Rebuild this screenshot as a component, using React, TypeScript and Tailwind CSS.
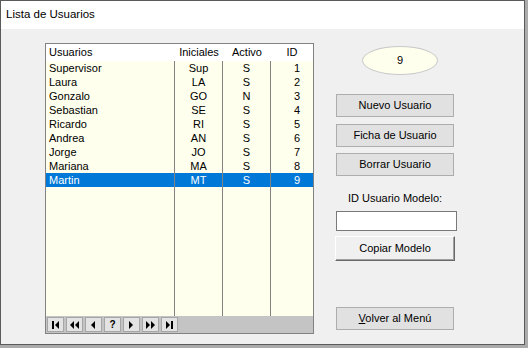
import React from "react";

const users = [
  ["Supervisor", "Sup", "S", "1"],
  ["Laura", "LA", "S", "2"],
  ["Gonzalo", "GO", "N", "3"],
  ["Sebastian", "SE", "S", "4"],
  ["Ricardo", "RI", "S", "5"],
  ["Andrea", "AN", "S", "6"],
  ["Jorge", "JO", "S", "7"],
  ["Mariana", "MA", "S", "8"],
  ["Martin", "MT", "S", "9"],
];
const selected = 8;

const NavIcon = ({ kind }: { kind: string }) => {
  if (kind === "?") {
    return <span className="text-[10px] font-bold leading-none">?</span>;
  }
  let shapes: React.ReactNode = null;
  if (kind === "first")
    shapes = (
      <>
        <rect x="1" y="0" width="2" height="8" />
        <path d="M8 0 L8 8 L4 4 Z" />
      </>
    );
  if (kind === "prevpage")
    shapes = (
      <>
        <path d="M4 0 L4 8 L0 4 Z" />
        <path d="M9 0 L9 8 L5 4 Z" />
      </>
    );
  if (kind === "prev") shapes = <path d="M6 0 L6 8 L2 4 Z" />;
  if (kind === "next") shapes = <path d="M2 0 L2 8 L6 4 Z" />;
  if (kind === "nextpage")
    shapes = (
      <>
        <path d="M0 0 L0 8 L4 4 Z" />
        <path d="M5 0 L5 8 L9 4 Z" />
      </>
    );
  if (kind === "last")
    shapes = (
      <>
        <path d="M1 0 L1 8 L5 4 Z" />
        <rect x="6" y="0" width="2" height="8" />
      </>
    );
  return (
    <svg width="9" height="8" viewBox="0 0 9 8" fill="black">
      {shapes}
    </svg>
  );
};

const Btn = ({ children, className = "" }: { children: React.ReactNode; className?: string }) => (
  <div
    className={
      "w-[118px] h-[23px] ml-[1px] bg-[#e1e1e1] border border-[#adadad] flex items-center justify-center text-black " +
      className
    }
  >
    {children}
  </div>
);

export default function App() {
  return (
    <div
      className="w-[528px] h-[348px] bg-[#ababab] text-[11px] text-black"
      style={{ fontFamily: '"Liberation Sans", Arial, sans-serif' }}
    >
      <div className="w-[525px] h-[345px] border border-[#5a5a5a] flex flex-col bg-[#f0f0f0]">
        {/* Title */}
        <div className="h-[28px] bg-white flex items-center pl-[5px] text-[11.5px]">Lista de Usuarios</div>

        {/* Body */}
        <div className="flex pl-[44px] pt-[14px]">
          {/* Table */}
          <div className="w-[269px] h-[291px] border border-[#828282] flex flex-col bg-[#ffffee]">
            <div className="h-[17px] bg-white flex items-center shrink-0">
              <div className="w-[129px] pl-[3px]">Usuarios</div>
              <div className="w-[48px] text-center">Iniciales</div>
              <div className="w-[48px] text-center">Activo</div>
              <div className="flex-1 text-center">ID</div>
            </div>
            <div className="flex-1 flex">
              {[0, 1, 2, 3].map((c) => (
                <div
                  key={c}
                  className={
                    c === 0
                      ? "w-[129px] border-r border-[#828282]"
                      : c === 3
                      ? "flex-1"
                      : "w-[48px] border-r border-[#828282]"
                  }
                >
                  {users.map((u, i) => (
                    <div
                      key={i}
                      className={
                        "h-[14px] leading-[14px] " +
                        (i === selected ? "bg-[#0078d7] text-white " : "") +
                        (c === 0 ? "pl-[3px]" : c === 3 ? "text-right pr-[13px]" : "text-center")
                      }
                    >
                      {u[c]}
                    </div>
                  ))}
                </div>
              ))}
            </div>
            {/* Navigation bar */}
            <div className="h-[17px] bg-[#c4c4c4] flex items-center pl-[1px] gap-[2px] shrink-0">
              {["first", "prevpage", "prev", "?", "next", "nextpage", "last"].map((k) => (
                <div
                  key={k}
                  className="w-[17px] h-[15px] bg-[#e3e3e3] border border-[#a6a6a6] flex items-center justify-center"
                >
                  <NavIcon kind={k} />
                </div>
              ))}
            </div>
          </div>

          {/* Right column */}
          <div className="ml-[21px] w-[122px] flex flex-col pt-[3px]">
            <div className="ml-[27px] w-[76px] h-[29px] rounded-[50%] border border-[#c8c8c8] bg-[#ffffee] flex items-center justify-center">
              9
            </div>
            <Btn className="mt-[19px]">Nuevo Usuario</Btn>
            <Btn className="mt-[7px]">Ficha de Usuario</Btn>
            <Btn className="mt-[6px]">Borrar Usuario</Btn>
            <div className="mt-[16px] h-[13px] leading-[13px] w-[120px] text-center">ID Usuario Modelo:</div>
            <div className="mt-[6px] ml-[1px] w-[121px] h-[20px] bg-white border border-[#7a7a7a]" />
            <div className="mt-[5px] w-[120px] h-[25px] bg-[#f0f0f0] border border-t-white border-l-white border-r-[#696969] border-b-[#696969] shadow-[inset_-1px_-1px_0_#a0a0a0] flex items-center justify-center">
              Copiar Modelo
            </div>
            <Btn className="mt-[46px]">
              <span>
                <span className="underline">V</span>olver al Menú
              </span>
            </Btn>
          </div>
        </div>
      </div>
    </div>
  );
}
